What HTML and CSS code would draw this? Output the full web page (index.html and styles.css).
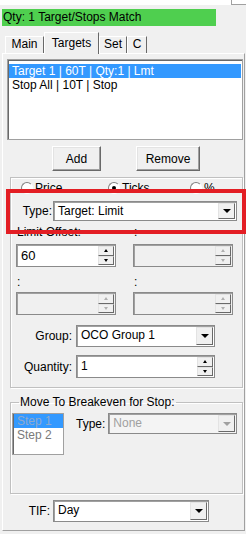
FILE: index.html
```html
<!DOCTYPE html>
<html lang="en">
<head>
  <meta charset="UTF-8" />
  <title>Targets</title>
  <link rel="stylesheet" href="styles.css">
</head>
<body>
  <div class="top"><div class="corner"></div></div>
  <div class="status">Qty: 1 Target/Stops Match</div>

  <!-- Tab strip -->
  <div class="tabs">
    <div class="tab tab-main">Main</div>
    <div class="tab tab-targets active">Targets</div>
    <div class="tab tab-set">Set</div>
    <div class="tab tab-c">C</div>
  </div>

  <div class="page">
    <div class="listbox">
      <div class="item selected">Target 1 | 60T | Qty:1 | Lmt</div>
      <div class="item">Stop All | 10T | Stop</div>
    </div>

    <div class="buttons">
      <button class="btn btn-add">Add</button>
      <button class="btn btn-remove">Remove</button>
    </div>

    <!-- Target settings -->
    <div class="group">
      <div class="radios">
        <label class="radio r-price"><span class="circle"></span>Price</label>
        <label class="radio r-ticks"><span class="circle checked"></span>Ticks</label>
        <label class="radio r-pct"><span class="circle"></span>%</label>
      </div>

      <div class="row type-row">
        <span class="lbl lbl-type">Type:</span>
        <div class="combo combo-type"><span class="val">Target: Limit</span><span class="arrow"></span></div>
      </div>

      <div class="pair pair-1">
        <div class="cap">Limit Offset:</div>
        <div class="cap">:</div>
        <div class="spin"><span class="val">60</span><span class="sbtns"><span class="sb up"></span><span class="sb down"></span></span></div>
        <div class="spin off"><span class="val"></span><span class="sbtns"><span class="sb up"></span><span class="sb down"></span></span></div>
      </div>

      <div class="pair pair-2">
        <div class="cap">:</div>
        <div class="cap">:</div>
        <div class="spin off"><span class="val"></span><span class="sbtns"><span class="sb up"></span><span class="sb down"></span></span></div>
        <div class="spin off"><span class="val"></span><span class="sbtns"><span class="sb up"></span><span class="sb down"></span></span></div>
      </div>

      <div class="row group-row">
        <span class="lbl lbl-wide">Group:</span>
        <div class="combo combo-group"><span class="val">OCO Group 1</span><span class="arrow"></span></div>
      </div>

      <div class="row qty-row">
        <span class="lbl lbl-wide">Quantity:</span>
        <div class="spin spin-qty"><span class="val">1</span><span class="sbtns"><span class="sb up"></span><span class="sb down"></span></span></div>
      </div>
    </div>

    <fieldset class="breakeven">
      <legend>Move To Breakeven for Stop:</legend>
      <div class="be-body">
        <div class="steps">
          <div class="step selected">Step 1</div>
          <div class="step">Step 2</div>
        </div>
        <span class="be-type">Type:</span>
        <div class="combo combo-be off"><span class="val">None</span><span class="arrow"></span></div>
      </div>
    </fieldset>

    <div class="row tif-row">
      <span class="lbl lbl-tif">TIF:</span>
      <div class="combo combo-tif"><span class="val">Day</span><span class="arrow"></span></div>
    </div>
  </div>

  <div class="highlight"></div>
</body>
</html>
```

FILE: styles.css
```css
* {
  box-sizing: border-box;
}
body {
  margin: 0;
  width: 246px;
  height: 534px;
  overflow: hidden;
  position: relative;
  background: #f0f0f0;
  font-family: "Liberation Sans", Arial, sans-serif;
  font-size: 12px;
  color: #000;
}
.top {
  height: 5px;
  background: #fff;
  display: flex;
  justify-content: flex-end;
}
.top .corner {
  width: 15px;
  border-left: 1px solid #a0a0a0;
  border-bottom: 1px solid #a0a0a0;
}
.status {
  margin: 4px 0 0 2px;
  width: 214px;
  height: 17px;
  line-height: 17px;
  padding-left: 1px;
  background: #4fcf4f;
}

/* tabs */
.tabs {
  display: flex;
  align-items: flex-end;
  height: 21px;
  margin-top: 6px;
  padding-left: 5px;
}
.tab {
  height: 17px;
  line-height: 15px;
  text-align: center;
  border: 1px solid;
  border-color: #fff #696969 transparent #fff;
  border-bottom: none;
}
.tab-main { width: 39px; }
.tab-targets { width: 55px; }
.tab-set { width: 28px; }
.tab-c { width: 20px; }
.tab.active {
  position: relative;
  z-index: 1;
  height: 22px;
  margin-bottom: -1px;
  padding-top: 3px;
  background: #f0f0f0;
}
.page {
  margin-left: 2px;
  width: 243px;
  height: 478px;
  border: 1px solid;
  border-color: #fff #a0a0a0 #a0a0a0 #fff;
}

/* list of targets */
.listbox {
  margin: 5px 0 0 4px;
  width: 236px;
  height: 81px;
  padding: 4px 1px 0 1px;
  background: #fff;
  border: 1px solid #a0a0a0;
  box-shadow: inset 1px 1px 0 #696969;
}
.item {
  height: 14px;
  line-height: 14px;
  padding-left: 3px;
}
.item.selected {
  background: #3399ff;
  color: #fff;
}
.buttons {
  display: flex;
  gap: 35px;
  margin-top: 6px;
  padding-left: 49px;
}
.btn {
  height: 25px;
  padding: 0;
  font: inherit;
  color: #000;
  background: #f0f0f0;
  border: 1px solid;
  border-color: #fff #696969 #696969 #fff;
  box-shadow: inset -1px -1px 0 #a0a0a0, inset 1px 1px 0 #e3e3e3;
}
.btn-add { width: 49px; }
.btn-remove { width: 64px; }

/* group boxes */
.group {
  margin: 6px 0 0 7px;
  width: 233px;
  height: 211px;
  border: 1px solid #c0c0c0;
  box-shadow: inset 1px 1px 0 #fff, 1px 1px 0 #fff;
}
.radios {
  display: flex;
  height: 13px;
  margin-top: 3px;
  padding-left: 10px;
}
.radio {
  display: flex;
  align-items: center;
  gap: 2px;
  height: 13px;
}
.r-price { width: 87px; }
.r-ticks { width: 82px; }
.circle {
  width: 12px;
  height: 12px;
  border-radius: 50%;
  background: #fff;
  border: 1px solid;
  border-color: #808080 #fff #fff #808080;
  display: flex;
  align-items: center;
  justify-content: center;
}
.circle.checked::after {
  content: "";
  width: 4px;
  height: 4px;
  border-radius: 50%;
  background: #000;
}
.row {
  display: flex;
  align-items: center;
}
.lbl {
  text-align: right;
}
.type-row {
  margin-top: 7px;
}
.lbl-type {
  width: 42px;
  padding-right: 1px;
}
.lbl-wide {
  width: 65px;
  padding-right: 4px;
}

/* combo boxes */
.combo {
  display: flex;
  height: 21px;
  background: #fff;
  border: 1px solid #8a8a8a;
  box-shadow: inset 1px 1px 0 #a0a0a0;
  padding: 1px;
}
.combo .val {
  flex: 1;
  padding: 0 0 0 3px;
  line-height: 17px;
}
.combo .arrow {
  width: 17px;
  background: #f0f0f0;
  border: 1px solid;
  border-color: #e3e3e3 #696969 #696969 #e3e3e3;
  display: flex;
  align-items: center;
  justify-content: center;
}
.combo .arrow::after {
  content: "";
  border-top: 4px solid #000;
  border-left: 4px solid transparent;
  border-right: 4px solid transparent;
}
.combo.off {
  background: #f4f4f4;
  color: #a0a0a0;
}
.combo.off .arrow::after {
  border-top-color: #a0a0a0;
}
.combo-type { width: 184px; height: 20px; }
.combo-group { width: 139px; height: 22px; }
.combo-be { width: 129px; }
.combo-tif { width: 156px; height: 22px; }

/* spin boxes */
.pair {
  display: grid;
  grid-template-columns: 100px 100px;
  column-gap: 17px;
  padding-left: 5px;
}
.pair-1 { margin-top: 5px; }
.pair-2 { margin-top: 9px; }
.cap {
  height: 13px;
  line-height: 13px;
  padding-left: 1px;
}
.pair-1 .cap { margin-bottom: 5px; }
.pair-2 .cap { margin-bottom: 3px; }
.spin {
  display: flex;
  height: 23px;
  background: #fff;
  border: 1px solid #8a8a8a;
  box-shadow: inset 1px 1px 0 #a0a0a0;
  padding: 1px;
}
.spin .val {
  flex: 1;
  padding: 2px 0 0 3px;
  font-size: 13px;
}
.spin.off {
  background: #f0f0f0;
}
.sbtns {
  width: 16px;
  display: flex;
  flex-direction: column;
}
.sb {
  flex: 1;
  background: #f0f0f0;
  border: 1px solid;
  border-color: #e3e3e3 #696969 #696969 #e3e3e3;
  display: flex;
  align-items: center;
  justify-content: center;
}
.sb.up::after {
  content: "";
  border-bottom: 3px solid #000;
  border-left: 2px solid transparent;
  border-right: 2px solid transparent;
}
.sb.down::after {
  content: "";
  border-top: 3px solid #000;
  border-left: 2px solid transparent;
  border-right: 2px solid transparent;
}
.spin.off .sb::after {
  border-top-color: #b0b0b0;
  border-bottom-color: #b0b0b0;
}
.group-row { margin-top: 10px; }
.qty-row { margin-top: 8px; }
.spin-qty { width: 139px; }
.spin-qty .val { font-size: 12px; }

/* breakeven */
.breakeven {
  margin: 7px 0 0 7px;
  width: 233px;
  height: 99px;
  padding: 0;
  border: 1px solid #c0c0c0;
  box-shadow: inset 1px 1px 0 #fff, 1px 1px 0 #fff;
  min-inline-size: 0;
}
.breakeven legend {
  margin-left: 8px;
  padding: 0 1px;
  line-height: 14px;
}
.be-body {
  display: flex;
  align-items: flex-start;
  margin-top: 4px;
  padding-left: 1px;
}
.steps {
  width: 52px;
  height: 42px;
  background: #fff;
  border: 1px solid #a0a0a0;
  box-shadow: inset 1px 1px 0 #696969;
  padding: 0 0 0 1px;
  color: #7a7a7a;
}
.step {
  height: 14px;
  line-height: 14px;
  padding-left: 3px;
}
.step.selected {
  background: #3399ff;
  color: #8fa9cc;
}
.be-type {
  margin: 4px 3px 0 12px;
}
.tif-row {
  margin-top: 6px;
}
.lbl-tif {
  width: 50px;
  padding-right: 3px;
}

/* red callout around the Type row */
.highlight {
  position: absolute;
  left: 6px;
  top: 189px;
  width: 240px;
  height: 45px;
  border: 4px solid #e31e24;
}
```
